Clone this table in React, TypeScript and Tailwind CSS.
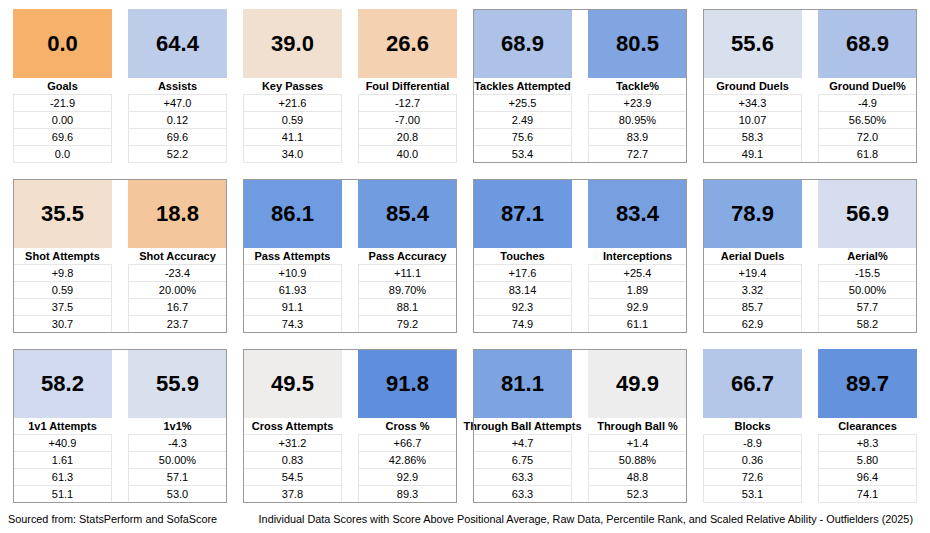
type Stat = {
  label: string;
  score: string;
  bg: string;
  rows: string[];
};

type Group = {
  boxed: boolean;
  items: [Stat, Stat];
};

const groups: Group[] = [
  {
    boxed: false,
    items: [
      { label: 'Goals', score: '0.0', bg: 'bg-[#f6b26b]', rows: ['-21.9', '0.00', '69.6', '0.0'] },
      { label: 'Assists', score: '64.4', bg: 'bg-[#bccce9]', rows: ['+47.0', '0.12', '69.6', '52.2'] },
    ],
  },
  {
    boxed: false,
    items: [
      { label: 'Key Passes', score: '39.0', bg: 'bg-[#f1e0d0]', rows: ['+21.6', '0.59', '41.1', '34.0'] },
      { label: 'Foul Differential', score: '26.6', bg: 'bg-[#f3d1b1]', rows: ['-12.7', '-7.00', '20.8', '40.0'] },
    ],
  },
  {
    boxed: true,
    items: [
      { label: 'Tackles Attempted', score: '68.9', bg: 'bg-[#aec2e8]', rows: ['+25.5', '2.49', '75.6', '53.4'] },
      { label: 'Tackle%', score: '80.5', bg: 'bg-[#80a5e1]', rows: ['+23.9', '80.95%', '83.9', '72.7'] },
    ],
  },
  {
    boxed: true,
    items: [
      { label: 'Ground Duels', score: '55.6', bg: 'bg-[#d9e0ed]', rows: ['+34.3', '10.07', '58.3', '49.1'] },
      { label: 'Ground Duel%', score: '68.9', bg: 'bg-[#aec2e8]', rows: ['-4.9', '56.50%', '72.0', '61.8'] },
    ],
  },
  {
    boxed: true,
    items: [
      { label: 'Shot Attempts', score: '35.5', bg: 'bg-[#f2dfcd]', rows: ['+9.8', '0.59', '37.5', '30.7'] },
      { label: 'Shot Accuracy', score: '18.8', bg: 'bg-[#f3c69b]', rows: ['-23.4', '20.00%', '16.7', '23.7'] },
    ],
  },
  {
    boxed: true,
    items: [
      { label: 'Pass Attempts', score: '86.1', bg: 'bg-[#6f9be0]', rows: ['+10.9', '61.93', '91.1', '74.3'] },
      { label: 'Pass Accuracy', score: '85.4', bg: 'bg-[#719ce0]', rows: ['+11.1', '89.70%', '88.1', '79.2'] },
    ],
  },
  {
    boxed: true,
    items: [
      { label: 'Touches', score: '87.1', bg: 'bg-[#6c99e0]', rows: ['+17.6', '83.14', '92.3', '74.9'] },
      { label: 'Interceptions', score: '83.4', bg: 'bg-[#78a0e1]', rows: ['+25.4', '1.89', '92.9', '61.1'] },
    ],
  },
  {
    boxed: true,
    items: [
      { label: 'Aerial Duels', score: '78.9', bg: 'bg-[#86aae2]', rows: ['+19.4', '3.32', '85.7', '62.9'] },
      { label: 'Aerial%', score: '56.9', bg: 'bg-[#d5ddee]', rows: ['-15.5', '50.00%', '57.7', '58.2'] },
    ],
  },
  {
    boxed: true,
    items: [
      { label: '1v1 Attempts', score: '58.2', bg: 'bg-[#d1daee]', rows: ['+40.9', '1.61', '61.3', '51.1'] },
      { label: '1v1%', score: '55.9', bg: 'bg-[#d9e0ed]', rows: ['-4.3', '50.00%', '57.1', '53.0'] },
    ],
  },
  {
    boxed: true,
    items: [
      { label: 'Cross Attempts', score: '49.5', bg: 'bg-[#efedec]', rows: ['+31.2', '0.83', '54.5', '37.8'] },
      { label: 'Cross %', score: '91.8', bg: 'bg-[#5f8fdc]', rows: ['+66.7', '42.86%', '92.9', '89.3'] },
    ],
  },
  {
    boxed: true,
    items: [
      { label: 'Through Ball Attempts', score: '81.1', bg: 'bg-[#7da4e1]', rows: ['+4.7', '6.75', '63.3', '63.3'] },
      { label: 'Through Ball %', score: '49.9', bg: 'bg-[#eeedee]', rows: ['+1.4', '50.88%', '48.8', '52.3'] },
    ],
  },
  {
    boxed: false,
    items: [
      { label: 'Blocks', score: '66.7', bg: 'bg-[#b4c7e8]', rows: ['-8.9', '0.36', '72.6', '53.1'] },
      { label: 'Clearances', score: '89.7', bg: 'bg-[#6592dc]', rows: ['+8.3', '5.80', '96.4', '74.1'] },
    ],
  },
];

function StatColumn({ stat }: { stat: Stat }) {
  return (
    <div className="flex w-[99px] flex-col">
      <div className={`flex h-[69px] items-center justify-center ${stat.bg}`}>
        <span className="text-[22px] font-bold leading-none text-black">{stat.score}</span>
      </div>
      <div className="flex h-[16px] items-center justify-center whitespace-nowrap text-[11px] font-bold leading-none text-black">
        {stat.label}
      </div>
      <div className="border-t border-[#e6e6e6]">
        {stat.rows.map((r, i) => (
          <div
            key={i}
            className="flex h-[17px] items-center justify-center border-x border-b border-[#e6e6e6] text-[11px] leading-none text-black"
          >
            {r}
          </div>
        ))}
      </div>
    </div>
  );
}

export default function App() {
  return (
    <div className="h-[533px] w-[930px] bg-white font-['Liberation_Sans',Arial,sans-serif]">
      <div className="grid grid-cols-[repeat(4,214px)] gap-x-[16px] gap-y-[16px] pl-[13px] pt-[9px]">
        {groups.map((g, i) => (
          <div
            key={i}
            className={`flex h-[154px] gap-[16px] ${g.boxed ? 'outline-1 outline-solid outline-[#9a9a9a] -outline-offset-1' : ''}`}
          >
            <StatColumn stat={g.items[0]} />
            <StatColumn stat={g.items[1]} />
          </div>
        ))}
      </div>
      <div className="mt-[10px] flex h-[13px] items-center justify-between pl-[8px] pr-[17px] text-[10.85px] leading-none text-black">
        <span>Sourced from: StatsPerform and SofaScore</span>
        <span>
          Individual Data Scores with Score Above Positional Average, Raw Data, Percentile Rank, and Scaled Relative
          Ability - Outfielders (2025)
        </span>
      </div>
    </div>
  );
}
